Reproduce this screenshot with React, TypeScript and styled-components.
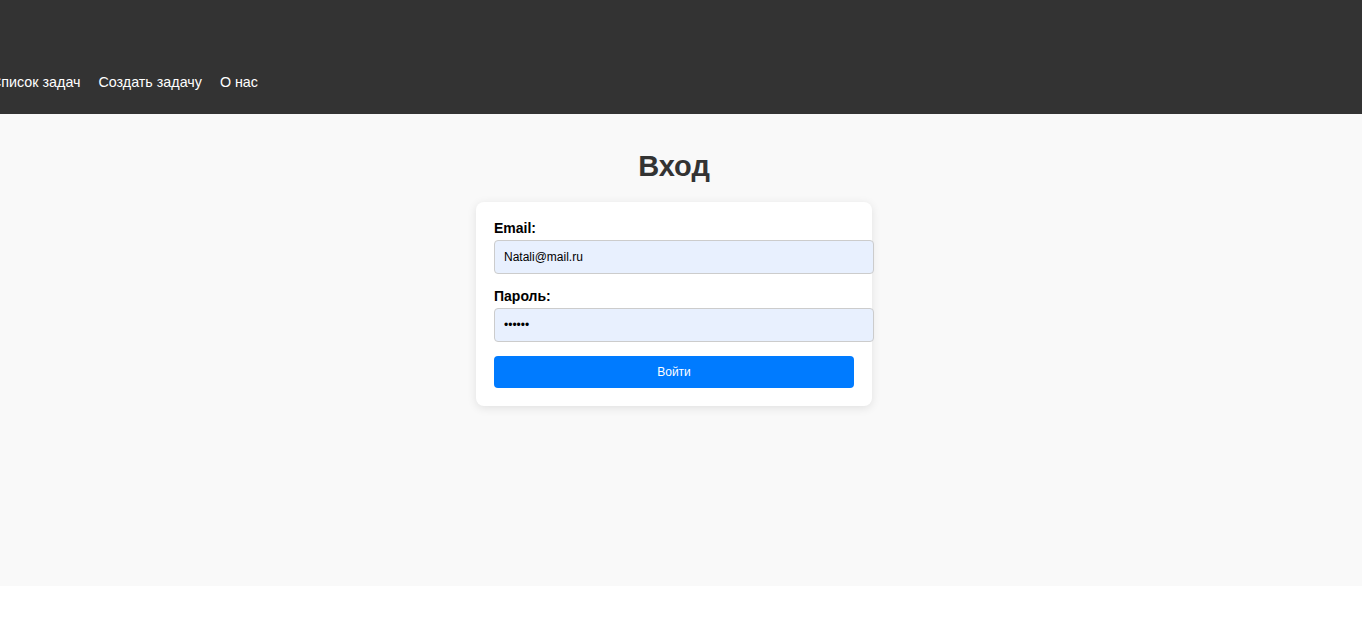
import React from "react";
import styled, { createGlobalStyle } from "styled-components";

const Global = createGlobalStyle`
  html, body { margin: 0; padding: 0; background: #ffffff; }
  body { font-family: "Liberation Sans", Arial, sans-serif; overflow: hidden; }
  * { box-sizing: border-box; }
`;

const Header = styled.header`
  background: #333333;
  height: 114px;
  padding-top: 73px;
`;

const Nav = styled.nav`
  display: flex;
  gap: 18px;
  margin-left: -9px;
`;

const NavLink = styled.a`
  color: #ffffff;
  font-size: 14.3px;
  line-height: 18px;
  text-decoration: none;
`;

const Main = styled.main`
  background: #f9f9f9;
  height: 472px;
  padding: 35px 14px 0 0;
  display: flex;
  flex-direction: column;
  align-items: center;
`;

const Title = styled.h1`
  margin: 0 0 19px;
  font-size: 29px;
  line-height: 34px;
  font-weight: 700;
  color: #333333;
`;

const Card = styled.form`
  width: 396px;
  padding: 18px;
  background: #ffffff;
  border-radius: 8px;
  box-shadow: 0 2px 10px rgba(0, 0, 0, 0.1);
`;

const Group = styled.div`
  margin-bottom: 14px;
`;

const Label = styled.label`
  display: block;
  font-size: 14px;
  line-height: 16px;
  font-weight: 700;
  color: #000000;
  margin-bottom: 4px;
`;

const Input = styled.input`
  display: block;
  width: 380px;
  height: 34px;
  padding: 0 9px;
  font-family: "Liberation Sans", Arial, sans-serif;
  font-size: 12px;
  color: #000000;
  background: #e8f0fe;
  border: 1px solid #cccccc;
  border-radius: 4px;
  outline: none;
`;

const Button = styled.button`
  display: block;
  width: 360px;
  height: 32px;
  background: #007bff;
  color: #ffffff;
  border: none;
  border-radius: 4px;
  font-family: "Liberation Sans", Arial, sans-serif;
  font-size: 12px;
  cursor: pointer;
`;

export default function App() {
  return (
    <>
      <Global />
      <Header>
        <Nav>
          <NavLink href="#">Список задач</NavLink>
          <NavLink href="#">Создать задачу</NavLink>
          <NavLink href="#">О нас</NavLink>
        </Nav>
      </Header>
      <Main>
        <Title>Вход</Title>
        <Card onSubmit={(e) => e.preventDefault()}>
          <Group>
            <Label>Email:</Label>
            <Input type="email" defaultValue="Natali@mail.ru" />
          </Group>
          <Group>
            <Label>Пароль:</Label>
            <Input type="password" defaultValue="123456" />
          </Group>
          <Button type="submit">Войти</Button>
        </Card>
      </Main>
    </>
  );
}
